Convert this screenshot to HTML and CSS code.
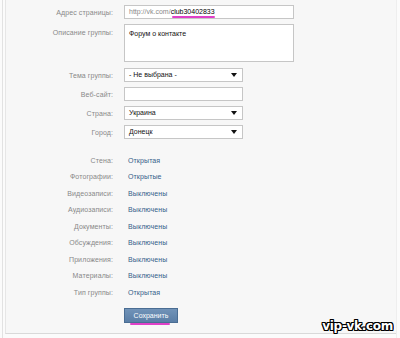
FILE: index.html
```html
<!DOCTYPE html>
<html lang="ru">
<head>
    <meta charset="UTF-8">
    <title>Настройки группы</title>
    <link rel="stylesheet" href="styles.css">
</head>
<body>

<div class="page">
    <div class="panel">
        <div class="row">
            <div class="label">Адрес страницы:</div>
            <div class="input wide"><span class="gray">http://vk.com/</span><span class="mark">club30402833</span></div>
        </div>
        <div class="row top">
            <div class="label">Описание группы:</div>
            <div class="input wide area">Форум о контакте</div>
        </div>
        <div class="row gap">
            <div class="label">Тема группы:</div>
            <div class="input select">- Не выбрана -<span class="arrow"></span></div>
        </div>
        <div class="row">
            <div class="label">Веб-сайт:</div>
            <div class="input select"></div>
        </div>
        <div class="row">
            <div class="label">Страна:</div>
            <div class="input select">Украина<span class="arrow"></span></div>
        </div>
        <div class="row">
            <div class="label">Город:</div>
            <div class="input select">Донецк<span class="arrow"></span></div>
        </div>

        <div class="list">
            <div class="item"><div class="label">Стена:</div><div class="value">Открытая</div></div>
            <div class="item"><div class="label">Фотографии:</div><div class="value">Открытые</div></div>
            <div class="item"><div class="label">Видеозаписи:</div><div class="value">Выключены</div></div>
            <div class="item"><div class="label">Аудиозаписи:</div><div class="value">Выключены</div></div>
            <div class="item"><div class="label">Документы:</div><div class="value">Выключены</div></div>
            <div class="item"><div class="label">Обсуждения:</div><div class="value">Выключены</div></div>
            <div class="item"><div class="label">Приложения:</div><div class="value">Выключены</div></div>
            <div class="item"><div class="label">Материалы:</div><div class="value">Выключены</div></div>
            <div class="item"><div class="label">Тип группы:</div><div class="value">Открытая</div></div>
        </div>

        <div class="actions">
            <button class="save">Сохранить</button>
        </div>
    </div>
    <div class="watermark">vip-vk.com</div>
</div>

</body>
</html>
```

FILE: styles.css
```css
body { margin: 0; background: #fbfbfb; font-family: "Liberation Sans", Arial, sans-serif; font-size: 7px; }
.page { position: relative; width: 395px; height: 338px; margin-left: 2px; border-left: 1px solid #e2e2e2; padding-left: 2px; box-sizing: border-box; border-right: 1px solid #eeeeee; }
.panel { height: 334px; border-left: 1px solid #e6e6e6; border-bottom: 1px solid #d9d9d9; background: #f7f7f7; padding-top: 5px; box-sizing: border-box; }

.row { display: flex; align-items: center; margin-bottom: 5px; }
.row.top { align-items: flex-start; }
.row.gap { margin-top: 6px; }
.label { width: 107px; text-align: right; color: #888; padding-right: 11px; flex-shrink: 0; letter-spacing: 0.1px; }
.row.top .label { padding-top: 5px; }

.input { position: relative; height: 14px; line-height: 12px; border: 1px solid #c6c6c6; background: #fff; box-sizing: border-box; padding-left: 4px; color: #111; }
.input.wide { width: 170px; }
.input.area { height: 38px; padding-top: 3px; }
.input.select { width: 119px; }
.gray { color: #8a8a8a; }
.mark { position: relative; color: #000; }
.mark::after { content: ""; position: absolute; left: 1px; right: 0; bottom: -3px; height: 2px; background: #e040c8; border-radius: 1px; }
.arrow { position: absolute; right: 5px; top: 4px; border-left: 3px solid transparent; border-right: 3px solid transparent; border-top: 4px solid #111; }

.list { margin-top: 13px; }
.item { display: flex; align-items: center; height: 16.5px; }
.value { color: #36618a; padding-left: 4px; letter-spacing: 0.1px; }

.actions { padding-left: 118px; margin-top: 7px; }
.save { position: relative; width: 54px; height: 15px; padding: 0; border: 1px solid #4a6d93; background: linear-gradient(#7193b8, #5a7ea6); color: #fff; font-family: "Liberation Sans", Arial, sans-serif; font-size: 7px; }
.save::after { content: ""; position: absolute; left: 5px; width: 40px; bottom: -3px; height: 2px; background: #e040c8; border-radius: 1px; }

.watermark { position: absolute; right: 3px; bottom: 5px; font-family: "DejaVu Sans", sans-serif; font-weight: bold; font-size: 12px; color: #fff; letter-spacing: -0.3px; text-shadow: 1px 0 0 #000, -1px 0 0 #000, 0 1px 0 #000, 0 -1px 0 #000, 1px 1px 0 #000, -1px -1px 0 #000, 1px -1px 0 #000, -1px 1px 0 #000; }
```
